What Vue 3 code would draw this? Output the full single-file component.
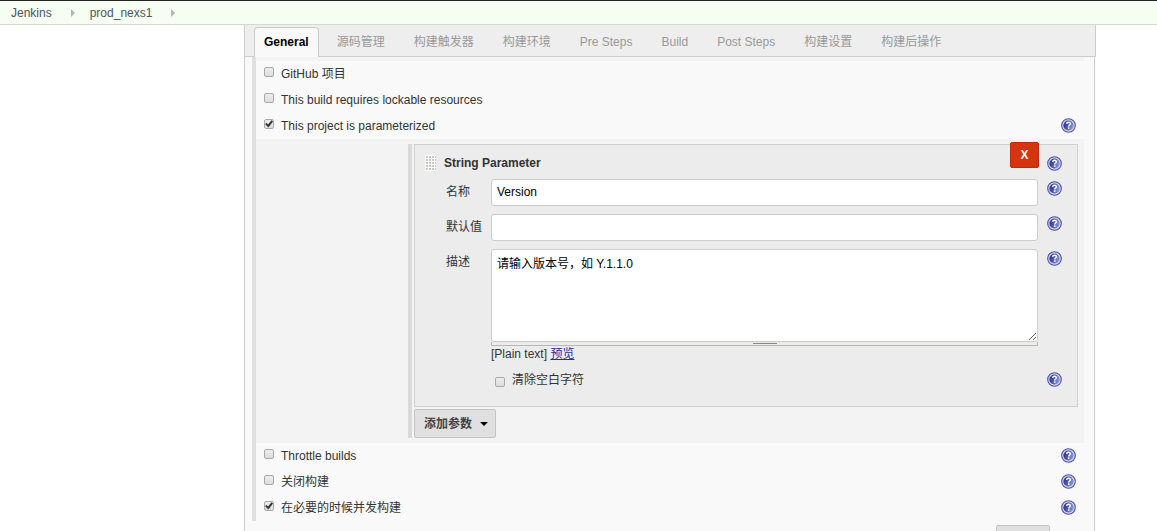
<script setup>
import { ref, reactive } from 'vue'

const crumbs = ['Jenkins', 'prod_nexs1']
const tabs = ['General', '源码管理', '构建触发器', '构建环境', 'Pre Steps', 'Build', 'Post Steps', '构建设置', '构建后操作']
const active = ref('General')

const topOptions = reactive([
  { id: 'github', label: 'GitHub 项目', on: false, help: false },
  { id: 'lockable', label: 'This build requires lockable resources', on: false, help: false },
  { id: 'parameterized', label: 'This project is parameterized', on: true, help: true },
])
const bottomOptions = reactive([
  { id: 'throttle', label: 'Throttle builds', on: false, help: true },
  { id: 'disable', label: '关闭构建', on: false, help: true },
  { id: 'concurrent', label: '在必要的时候并发构建', on: true, help: true },
])

const param = reactive({ name: 'Version', value: '', description: '请输入版本号，如 Y.1.1.0', trim: false })
</script>

<template>
  <div class="page">
    <svg class="defs" aria-hidden="true">
      <defs>
        <linearGradient id="helpFill" x1="0" y1="0" x2="1" y2="0.3">
          <stop offset="0" stop-color="#2a2a92" />
          <stop offset="0.45" stop-color="#4a50a8" />
          <stop offset="1" stop-color="#8494d4" />
        </linearGradient>
        <symbol id="help" viewBox="0 0 15 15">
          <circle cx="7.5" cy="7.5" r="6.8" fill="#cdd4f0" stroke="#5050a6" stroke-width="1.1" />
          <circle cx="7.5" cy="7.5" r="5.1" fill="url(#helpFill)" />
          <path d="M5.6 5.9C5.7 4.700 6.500 4.200 7.500 4.200c1.100 0 1.900.6 1.900 1.500 0 1.200-1.700 1.300-1.700 2.700" fill="none" stroke="#fff" stroke-width="1.4" />
          <rect x="6.900" y="9.300" width="1.600" height="1.600" fill="#fff" />
        </symbol>
      </defs>
    </svg>

    <nav class="crumbs">
      <template v-for="c in crumbs" :key="c">
        <a href="#">{{ c }}</a>
        <i class="arrow"></i>
      </template>
    </nav>

    <main class="panel">
      <div class="tabs" role="tablist">
        <button v-for="t in tabs" :key="t" type="button" role="tab" class="tab" :class="{ active: t === active }" :aria-selected="t === active" @click="active = t">{{ t }}</button>
      </div>

      <form class="form" @submit.prevent>
        <div class="section">
          <div class="strip"></div>
          <div v-for="o in topOptions" :key="o.id" class="option">
            <input :id="o.id" v-model="o.on" type="checkbox" class="check" />
            <label :for="o.id">{{ o.label }}</label>
            <a v-if="o.help" href="#" class="help" aria-label="帮助"><svg><use href="#help" /></svg></a>
          </div>

          <div class="nested">
            <div class="params">
              <section class="card">
                <button type="button" class="remove">X</button>
                <header class="head">
                  <span class="grip"></span>
                  <b>String Parameter</b>
                  <a href="#" class="help" aria-label="帮助"><svg><use href="#help" /></svg></a>
                </header>
                <div class="fields">
                  <label for="pname">名称</label>
                  <input id="pname" v-model="param.name" type="text" class="text" />
                  <a href="#" class="help" aria-label="帮助"><svg><use href="#help" /></svg></a>

                  <label for="pvalue">默认值</label>
                  <input id="pvalue" v-model="param.value" type="text" class="text" />
                  <a href="#" class="help" aria-label="帮助"><svg><use href="#help" /></svg></a>

                  <label for="pdesc">描述</label>
                  <div>
                    <textarea id="pdesc" v-model="param.description" class="text area"></textarea>
                    <div class="sizer"><span></span></div>
                    <div class="format">[Plain text] <a href="#">预览</a></div>
                  </div>
                  <a href="#" class="help" aria-label="帮助"><svg><use href="#help" /></svg></a>

                  <div class="trim">
                    <input id="ptrim" v-model="param.trim" type="checkbox" class="check" />
                    <label for="ptrim">清除空白字符</label>
                  </div>
                  <a href="#" class="help" aria-label="帮助"><svg><use href="#help" /></svg></a>
                </div>
              </section>
              <button type="button" class="add">添加参数<i></i></button>
            </div>
          </div>

          <div v-for="o in bottomOptions" :key="o.id" class="option">
            <input :id="o.id" v-model="o.on" type="checkbox" class="check" />
            <label :for="o.id">{{ o.label }}</label>
            <a v-if="o.help" href="#" class="help" aria-label="帮助"><svg><use href="#help" /></svg></a>
          </div>
        </div>
        <div class="more"><button type="button" aria-label="高级"></button></div>
      </form>
    </main>
  </div>
</template>

<style>
body {
  background: #fff;
}
</style>

<style scoped>
.page {
  display: flex;
  flex-direction: column;
  height: 100vh;
  overflow: hidden;
  color: #333;
  font: 12px/16px "Liberation Sans", Arial, "Noto Sans CJK SC", sans-serif;
}
.page * {
  box-sizing: border-box;
}
.defs {
  position: absolute;
  width: 0;
  height: 0;
}
button,
input,
textarea {
  margin: 0;
  font: inherit;
}
.crumbs {
  display: flex;
  flex: none;
  align-items: center;
  height: 25px;
  padding-left: 11px;
  border-top: 1px solid #222;
  border-bottom: 1px solid #d3d9cc;
  background: #f6fdf2;
}
.crumbs a {
  color: #4d545d;
  text-decoration: none;
}
.arrow {
  margin: 0 15px 0 19px;
  border: solid transparent;
  border-width: 4px 0 4px 4px;
  border-left-color: #b5b5b5;
}
.panel {
  display: flex;
  flex: 1 0 auto;
  flex-direction: column;
  margin: 0 62px 0 244px;
  border-left: 1px solid #ccc;
  border-right: 1px solid #ccc;
  background: #f9f9f9;
}
.tabs {
  display: flex;
  align-items: flex-end;
  gap: 7px;
  height: 32px;
  margin-right: -2px;
  padding-left: 9px;
  border-right: 1px solid #ccc;
  border-bottom: 1px solid #ccc;
  background: #eee;
}
.tab {
  height: 29px;
  padding: 0 10px;
  border: 1px solid transparent;
  border-bottom: 0;
  background: none;
  color: #999;
  white-space: nowrap;
}
.tab.active {
  height: 30px;
  margin-bottom: -1px;
  padding: 0 9px 2px;
  border-color: #ccc;
  border-radius: 4px 4px 0 0;
  background: #f9f9f9;
  color: #000;
  font-weight: bold;
}
.form {
  padding: 0 10px 0 7px;
}
.section {
  border-left: 4px solid #e0e0e0;
}
.strip {
  height: 4px;
  background: #f3f3f3;
}
.option {
  display: flex;
  align-items: flex-start;
  height: 26px;
  padding: 0 8px;
}
.option label {
  flex: 1;
  padding-left: 7px;
  line-height: 26px;
}
.check {
  appearance: none;
  flex: none;
  width: 10px;
  height: 10px;
  border: 1px solid #a9a9a9;
  border-radius: 2px;
  background: linear-gradient(#ededed, #dcdcdc);
}
.check:checked::after {
  content: "";
  display: block;
  width: 8px;
  height: 8px;
  background: #333;
  clip-path: polygon(0 50%, 18% 36%, 38% 56%, 82% 4%, 100% 18%, 42% 94%);
}
.option .check {
  margin-top: 6px;
}
.help {
  display: block;
  width: 15px;
  height: 15px;
}
.help svg {
  display: block;
  width: 15px;
  height: 15px;
}
.option .help {
  margin-top: 5px;
}
.nested {
  padding: 5px 6px 5px 152px;
  background: #f3f3f3;
}
.params {
  padding-left: 2px;
  border-left: 4px solid #d9d9d9;
}
.card {
  position: relative;
  padding-bottom: 18px;
  border: 1px solid #d0d0d0;
  background: #ececec;
}
.remove {
  position: absolute;
  top: -3px;
  right: 38px;
  width: 29px;
  height: 26px;
  padding: 0;
  border: 1px solid #c02a0c;
  border-radius: 2px;
  background: #d4350f;
  color: #fff;
  font-weight: bold;
}
.head {
  display: flex;
  align-items: center;
  height: 34px;
  padding: 2px 15px 0 10px;
}
.head b {
  flex: 1;
  padding-left: 8px;
}
.grip {
  width: 11px;
  height: 16px;
  background:
    linear-gradient(90deg, #fff 1px, transparent 1px) 0 0 / 3px 3px,
    linear-gradient(#fff 1px, #c9c9c4 1px) 0 0 / 3px 3px;
}
.fields {
  display: grid;
  grid-template-columns: 45px 1fr 24px;
  row-gap: 8px;
  padding: 0 15px 0 31px;
}
.fields > label {
  line-height: 26px;
}
.fields > .help {
  justify-self: end;
  margin-top: 2px;
}
.text {
  display: block;
  width: 100%;
  height: 27px;
  padding: 0 5px 2px;
  border: 1px solid #ccc;
  border-radius: 3px;
  outline: 0;
  background: #fff;
  color: #000;
}
.area {
  height: 93px;
  padding: 6px 5px;
  resize: vertical;
}
.sizer {
  display: flex;
  justify-content: center;
  height: 4px;
  border: 1px solid #b5bab0;
  border-top: 0;
}
.sizer span {
  width: 24px;
  height: 1px;
  margin-top: 1px;
  background: #888;
}
.format a {
  color: #2c2c94;
}
.trim {
  display: flex;
  grid-column: 1 / 3;
  align-items: flex-end;
  gap: 7px;
  height: 18px;
  padding-left: 49px;
}
.trim .check {
  margin-bottom: 1px;
}
.add {
  display: flex;
  align-items: center;
  height: 29px;
  margin-top: 2px;
  padding: 0 7px 0 9px;
  border: 1px solid #c4c4c4;
  border-radius: 2px;
  background: #e0e0e0;
  color: #444;
  font-weight: bold;
}
.add i {
  margin-left: 8px;
  border: solid transparent;
  border-width: 4px 4px 0;
  border-top-color: #000;
}
.more {
  display: flex;
  justify-content: flex-end;
  padding: 4px 34px 0 0;
}
.more button {
  width: 54px;
  height: 28px;
  border: 1px solid #c4c4c4;
  border-radius: 2px;
  background: #e0e0e0;
}
</style>
